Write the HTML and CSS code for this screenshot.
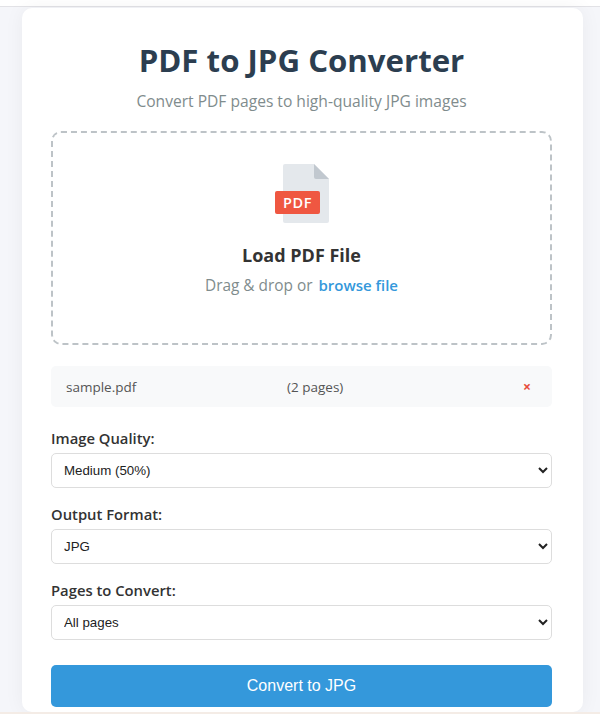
FILE: index.html
```html
<!DOCTYPE html>
<html lang="en">
<head>
<meta charset="utf-8">
<title>PDF to JPG Converter</title>
<link rel="stylesheet" href="styles.css">
</head>
<body>
<div class="topbar"></div>
<main class="card">
  <h1 class="title">PDF to JPG Converter</h1>
  <p class="subtitle">Convert PDF pages to high-quality JPG images</p>
  <section class="dropzone">
    <svg class="pdf-icon" width="60" height="62" viewBox="0 0 60 62" aria-hidden="true">
      <path d="M8 3a2 2 0 0 1 2-2h29l15 15v42a2 2 0 0 1-2 2H10a2 2 0 0 1-2-2z" fill="#e4e8ec"/>
      <path d="M39 1l15 15H41a2 2 0 0 1-2-2z" fill="#c1c8cf"/>
      <rect x="0" y="28" width="45" height="23" rx="2" fill="#ef5741"/>
      <text class="pdf-text" x="22.5" y="44.5" text-anchor="middle">PDF</text>
    </svg>
    <h2 class="drop-title">Load PDF File</h2>
    <p class="drop-text">Drag &amp; drop or <span class="browse">browse file</span></p>
  </section>
  <div class="file-row">
    <span class="file-name">sample.pdf</span>
    <span class="file-pages">(2 pages)</span>
    <span class="file-remove">×</span>
  </div>
  <div class="field">
    <label class="field-label" for="q">Image Quality:</label>
    <select class="field-select" id="q"><option>Medium (50%)</option></select>
  </div>
  <div class="field">
    <label class="field-label" for="f">Output Format:</label>
    <select class="field-select" id="f"><option>JPG</option></select>
  </div>
  <div class="field">
    <label class="field-label" for="p">Pages to Convert:</label>
    <select class="field-select" id="p"><option>All pages</option></select>
  </div>
  <button class="convert" type="button">Convert to JPG</button>
</main>
<div class="bottombar"></div>
</body>
</html>
```
FILE: styles.css
```css
* { box-sizing: border-box; }
html, body { height: 100%; }
body {
  margin: 0;
  height: 714px;
  overflow: hidden;
  background: #f5f6fa;
  font-family: "Open Sans", "Noto Sans", sans-serif;
  display: flex;
  flex-direction: column;
  align-items: center;
}
.topbar {
  align-self: stretch;
  height: 7px;
  flex: none;
  background: #fff;
  border-bottom: 1px solid #e2e2e6;
}
.bottombar {
  align-self: stretch;
  height: 2px;
  flex: none;
  background: #f4ece6;
}
.card {
  flex: none;
  width: 561px;
  height: 704px;
  margin: 1px 0 0 4px;
  padding: 29px 30.5px 0 29.5px;
  background: #fff;
  border-radius: 10px;
  box-shadow: 0 0 20px rgba(0, 0, 0, 0.05);
}
.title {
  margin: 0;
  text-align: center;
  font-size: 31.2px;
  line-height: 46px;
  font-weight: 700;
  color: #2c3e50;
}
.subtitle {
  margin: 6px 0 0;
  text-align: center;
  font-size: 15.6px;
  line-height: 24px;
  color: #7f8c8d;
}
.dropzone {
  margin-top: 18px;
  height: 214px;
  border: 2px dashed #bdc3c7;
  border-radius: 10px;
  padding-top: 30px;
  display: flex;
  flex-direction: column;
  align-items: center;
}
.pdf-icon { display: block; margin-left: 6px; }
.pdf-text { font-family: "Open Sans", sans-serif; font-size: 14.5px; font-weight: 600; letter-spacing: 0.5px; fill: #fff; }
.drop-title {
  margin: 17px 0 0;
  font-size: 18px;
  line-height: 26px;
  font-weight: 700;
  color: #333;
}
.drop-text {
  margin: 5px 0 0;
  font-size: 15.4px;
  line-height: 24px;
  color: #7f8c8d;
}
.browse { margin-left: 2px; color: #3498db; font-size: 15px; font-weight: 600; }
.file-row {
  margin-top: 21px;
  height: 41px;
  padding: 0 15px;
  background: #f8f9fa;
  border-radius: 5px;
  display: flex;
  align-items: center;
  font-size: 13.5px;
  color: #555;
}
.file-name { width: 221px; }
.file-pages { flex: 1; }
.file-remove { width: 11px; margin-right: 3px; color: #e74c3c; font-weight: 700; font-size: 14px; }
.field { margin-top: 20px; }
.field-label {
  display: block;
  height: 26px;
  font-size: 14.8px;
  line-height: 23px;
  font-weight: 600;
  color: #333;
}
.field-select {
  display: block;
  width: 100%;
  height: 35px;
  padding: 0 8px;
  background: #fff;
  border: 1px solid #ddd;
  border-radius: 5px;
  font-family: "Liberation Sans", Arial, sans-serif;
  font-size: 13.3px;
  color: #222;
}
.field + .field { margin-top: 15px; }
.convert {
  display: block;
  width: 100%;
  height: 42px;
  margin-top: 25px;
  border: 0;
  border-radius: 5px;
  background: #3498db;
  color: #fff;
  font-family: "Liberation Sans", Arial, sans-serif;
  font-size: 16px;
}
```
